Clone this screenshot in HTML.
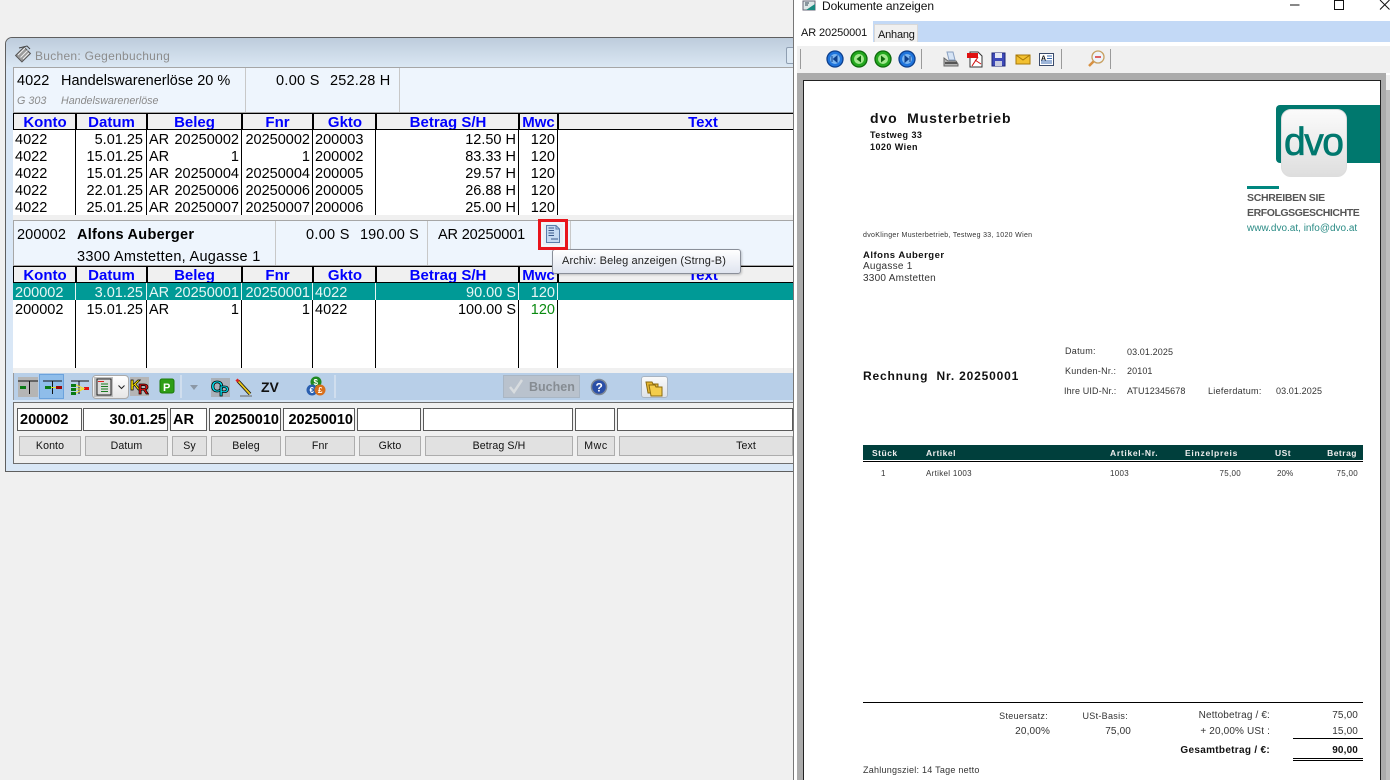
<!DOCTYPE html>
<html><head><meta charset="utf-8"><title>Buchen</title>
<style>
html,body{margin:0;padding:0;width:1390px;height:780px;overflow:hidden;background:#f0f0f0}
body{position:relative;font-family:"Liberation Sans",sans-serif;color:#000}
div,span{position:absolute;box-sizing:border-box;white-space:pre}
.r{left:14px;width:779px;height:17px;line-height:17px;font-size:14.5px;color:#000}
.r span{top:2px;height:15px;overflow:visible}
.c1{left:1px}.c2{left:62px;width:67px;text-align:right}.c3{left:135px}
.c4{left:135px;width:90px;text-align:right}.c5{left:228px;width:68px;text-align:right}
.c6{left:301px}.c7{left:362px;width:140px;text-align:right}.c8{left:505px;width:36px;text-align:right}
.hd{left:13px;width:780px;height:17px;background:#f0f0f0;border-top:1px solid #000;border-bottom:1px solid #000;overflow:hidden}
.hd span{top:1px;height:14px;line-height:15px;font-size:15px;font-weight:bold;color:#00f;text-align:center;overflow:hidden}
.hd span.hs{top:0;height:16px;background:#000;width:2px;border-right:0}
.v{width:1px;background:#000}
.p{background:#eef5fd;border:1px solid #a6a6a6;left:13px;width:800px}
.t{font-size:14.5px;line-height:18px;height:18px}
.in{top:408px;height:23px;background:#fff;border:1px solid #5a5a5a;font-size:14.5px;font-weight:bold;line-height:23px}
.lb{top:436px;height:20px;background:#e1e1e1;border:1px solid #adadad;font-size:10.6px;line-height:18px;text-align:center;color:#111;letter-spacing:.1px}
.d{line-height:14px;height:14px;font-size:9px;color:#333;letter-spacing:.3px}
.n{letter-spacing:.1px}
.s{font-size:10px;letter-spacing:.15px}
.rt{text-align:right}
.b{font-weight:bold;color:#111}
.h{color:#eee;font-weight:bold;font-size:8.5px;letter-spacing:.5px;top:446px}
</style></head><body>

<!-- left window -->
<div style="left:5px;top:37px;width:800px;height:435px;border:1px solid #5f5f5f;border-top-left-radius:7px;background:#d9e7f6"></div>
<div style="left:6px;top:38px;width:787px;height:30px;border-top-left-radius:6px;background:linear-gradient(#bdccdc,#dbe8f4)"></div>
<div style="left:35px;top:48px;height:16px;line-height:16px;font-size:12px;color:#8c8c8c;letter-spacing:.28px">Buchen: Gegenbuchung</div>
<div style="left:786px;top:47px;width:10px;height:17px;border:1px solid #8f9fb2;border-radius:2px;background:#dce8f3"></div>

<!-- panel 1 -->
<div class="p" style="top:67px;height:46px"></div>
<div style="left:245px;top:68px;width:1px;height:44px;background:#c8c8c8"></div>
<div style="left:399px;top:68px;width:1px;height:44px;background:#c8c8c8"></div>
<div class="t" style="left:17px;top:72px">4022</div>
<div class="t" style="left:61px;top:72px">Handelswarenerlöse 20 %</div>
<div class="t" style="left:276px;top:72px;letter-spacing:.3px">0.00 S</div>
<div class="t" style="left:330px;top:72px;letter-spacing:.2px">252.28 H</div>
<div style="left:17px;top:94px;height:14px;line-height:14px;font-size:10.8px;font-style:italic;color:#8a8a8a">G 303</div>
<div style="left:61px;top:94px;height:14px;line-height:14px;font-size:10.7px;font-style:italic;color:#8a8a8a">Handelswarenerlöse</div>

<!-- table 1 -->
<div style="left:13px;top:113px;width:780px;height:103px;background:#fff"></div>
<div style="left:13px;top:215px;width:780px;height:5px;background:#f0f0f0"></div>
<div class="hd" style="top:113px">
<span style="left:2px;width:60px">Konto</span><span style="left:64px;width:69px">Datum</span><span style="left:135px;width:93px">Beleg</span><span style="left:230px;width:69px">Fnr</span><span style="left:301px;width:62px">Gkto</span><span style="left:364px;width:142px">Betrag S/H</span><span style="left:507px;width:37px">Mwc</span><span style="left:546px;width:288px">Text</span>
<span class="hs" style="left:62px"></span><span class="hs" style="left:133px"></span><span class="hs" style="left:228px"></span><span class="hs" style="left:299px"></span><span class="hs" style="left:362px"></span><span class="hs" style="left:505px"></span><span class="hs" style="left:544px"></span>
</div>
<div class="v" style="left:13px;top:113px;height:17px"></div>
<div class="v" style="left:75px;top:130px;height:85px"></div><div class="v" style="left:146px;top:130px;height:85px"></div><div class="v" style="left:241px;top:130px;height:85px"></div><div class="v" style="left:312px;top:130px;height:85px"></div><div class="v" style="left:375px;top:130px;height:85px"></div><div class="v" style="left:518px;top:130px;height:85px"></div><div class="v" style="left:557px;top:130px;height:85px"></div>
<div class="r" style="top:130px"><span class="c1">4022</span><span class="c2">5.01.25</span><span class="c3">AR</span><span class="c4">20250002</span><span class="c5">20250002</span><span class="c6">200003</span><span class="c7">12.50 H</span><span class="c8">120</span></div>
<div class="r" style="top:147px"><span class="c1">4022</span><span class="c2">15.01.25</span><span class="c3">AR</span><span class="c4">1</span><span class="c5">1</span><span class="c6">200002</span><span class="c7">83.33 H</span><span class="c8">120</span></div>
<div class="r" style="top:164px"><span class="c1">4022</span><span class="c2">15.01.25</span><span class="c3">AR</span><span class="c4">20250004</span><span class="c5">20250004</span><span class="c6">200005</span><span class="c7">29.57 H</span><span class="c8">120</span></div>
<div class="r" style="top:181px"><span class="c1">4022</span><span class="c2">22.01.25</span><span class="c3">AR</span><span class="c4">20250006</span><span class="c5">20250006</span><span class="c6">200005</span><span class="c7">26.88 H</span><span class="c8">120</span></div>
<div class="r" style="top:198px"><span class="c1">4022</span><span class="c2">25.01.25</span><span class="c3">AR</span><span class="c4">20250007</span><span class="c5">20250007</span><span class="c6">200006</span><span class="c7">25.00 H</span><span class="c8">120</span></div>

<!-- panel 2 -->
<div class="p" style="top:220px;height:46px"></div>
<div style="left:275px;top:221px;width:1px;height:44px;background:#c8c8c8"></div>
<div style="left:427px;top:221px;width:1px;height:44px;background:#c8c8c8"></div>
<div style="left:570px;top:221px;width:1px;height:28px;background:#c8c8c8"></div>
<div class="t" style="left:17px;top:226px;letter-spacing:.1px">200002</div>
<div class="t" style="left:77px;top:226px;font-weight:bold;letter-spacing:.28px">Alfons Auberger</div>
<div class="t" style="left:77px;top:248px;letter-spacing:.28px">3300 Amstetten, Augasse 1</div>
<div class="t" style="left:306px;top:226px;letter-spacing:.3px">0.00 S</div>
<div class="t" style="left:360px;top:226px;letter-spacing:.1px">190.00 S</div>
<div class="t" style="left:438px;top:226px;letter-spacing:-.15px">AR 20250001</div>

<!-- table 2 -->
<div style="left:13px;top:266px;width:780px;height:102px;background:#fff"></div>
<div style="left:13px;top:368px;width:780px;height:5px;background:#f0f0f0"></div>
<div class="hd" style="top:266px">
<span style="left:2px;width:60px">Konto</span><span style="left:64px;width:69px">Datum</span><span style="left:135px;width:93px">Beleg</span><span style="left:230px;width:69px">Fnr</span><span style="left:301px;width:62px">Gkto</span><span style="left:364px;width:142px">Betrag S/H</span><span style="left:507px;width:37px">Mwc</span><span style="left:546px;width:288px">Text</span>
<span class="hs" style="left:62px"></span><span class="hs" style="left:133px"></span><span class="hs" style="left:228px"></span><span class="hs" style="left:299px"></span><span class="hs" style="left:362px"></span><span class="hs" style="left:505px"></span><span class="hs" style="left:544px"></span>
</div>
<div class="v" style="left:13px;top:266px;height:17px"></div>
<div class="v" style="left:75px;top:300px;height:68px"></div><div class="v" style="left:146px;top:300px;height:68px"></div><div class="v" style="left:241px;top:300px;height:68px"></div><div class="v" style="left:312px;top:300px;height:68px"></div><div class="v" style="left:375px;top:300px;height:68px"></div><div class="v" style="left:518px;top:300px;height:68px"></div><div class="v" style="left:557px;top:300px;height:68px"></div>
<div style="left:13px;top:283px;width:780px;height:17px;background:#009a96"></div>
<div class="v" style="left:75px;top:283px;height:17px;background:#e6f5f4"></div><div class="v" style="left:146px;top:283px;height:17px;background:#e6f5f4"></div><div class="v" style="left:241px;top:283px;height:17px;background:#e6f5f4"></div><div class="v" style="left:312px;top:283px;height:17px;background:#e6f5f4"></div><div class="v" style="left:375px;top:283px;height:17px;background:#e6f5f4"></div><div class="v" style="left:518px;top:283px;height:17px;background:#e6f5f4"></div><div class="v" style="left:557px;top:283px;height:17px;background:#e6f5f4"></div>
<div class="r" style="top:283px;color:#e8f6f5"><span class="c1">200002</span><span class="c2">3.01.25</span><span class="c3">AR</span><span class="c4">20250001</span><span class="c5">20250001</span><span class="c6">4022</span><span class="c7">90.00 S</span><span class="c8">120</span></div>
<div class="r" style="top:300px"><span class="c1">200002</span><span class="c2">15.01.25</span><span class="c3">AR</span><span class="c4">1</span><span class="c5">1</span><span class="c6">4022</span><span class="c7">100.00 S</span><span class="c8" style="color:#0a8a10">120</span></div>

<!-- toolbar -->
<div style="left:13px;top:373px;width:780px;height:27px;background:#b8cfe8;border-left:1px solid #999"></div>
<div style="left:92px;top:375px;width:37px;height:24px;background:linear-gradient(#fff,#e6e6e6);border:1px solid #aaa;border-radius:4px"></div>
<div style="left:261px;top:378px;height:18px;line-height:18px;font-size:14px;font-weight:bold;color:#111">ZV</div>
<div style="left:503px;top:375px;width:77px;height:23px;background:#b9c2cd;border:1px solid #a9b6c4"></div>
<div style="left:529px;top:379px;height:17px;line-height:17px;font-size:12.5px;font-weight:bold;color:#868c92">Buchen</div>
<div style="left:641px;top:376px;width:27px;height:22px;background:linear-gradient(#fafafa,#dfe3e8);border:1px solid #a8b4c2;border-radius:3px"></div>

<!-- input panel -->
<div style="left:13px;top:402px;width:780px;height:62px;background:#f0f0f0;border:1px solid #6e6e6e;border-right:0"></div>
<div class="in" style="left:17px;width:65px;padding-left:2px">200002</div>
<div class="in" style="left:83px;width:85px;text-align:right;padding-right:1px">30.01.25</div>
<div class="in" style="left:170px;width:37px;padding-left:2px">AR</div>
<div class="in" style="left:209px;width:72px;text-align:right;padding-right:1px">20250010</div>
<div class="in" style="left:283px;width:72px;text-align:right;padding-right:1px">20250010</div>
<div class="in" style="left:357px;width:64px"></div>
<div class="in" style="left:423px;width:150px"></div>
<div class="in" style="left:575px;width:40px"></div>
<div class="in" style="left:617px;width:176px"></div>
<div class="lb" style="left:19px;width:62px">Konto</div>
<div class="lb" style="left:85px;width:83px">Datum</div>
<div class="lb" style="left:172px;width:35px">Sy</div>
<div class="lb" style="left:211px;width:70px">Beleg</div>
<div class="lb" style="left:285px;width:70px">Fnr</div>
<div class="lb" style="left:359px;width:62px">Gkto</div>
<div class="lb" style="left:425px;width:148px">Betrag S/H</div>
<div class="lb" style="left:577px;width:38px;letter-spacing:.6px">Mwc</div>
<div class="lb" style="left:619px;width:174px;padding-left:80px">Text</div>

<!-- tooltip -->
<div style="left:552px;top:249px;width:189px;height:25px;background:linear-gradient(#fff,#dfe4ef);border:1px solid #8a8f99;border-radius:3px;box-shadow:1px 1px 2px rgba(0,0,0,.2)"></div>
<div style="left:562px;top:253px;height:16px;line-height:16px;font-size:11px;color:#222;letter-spacing:.12px">Archiv: Beleg anzeigen (Strng-B)</div>

<!-- right window -->
<div style="left:793px;top:0;width:597px;height:780px;background:#fff;border-left:1px solid #777"></div>
<div style="left:822px;top:0;height:13px;line-height:13px;font-size:12px;color:#111;letter-spacing:-.08px">Dokumente anzeigen</div>
<div style="left:794px;top:21px;width:596px;height:21px;background:#c3d9f6"></div>
<div style="left:794px;top:21px;width:79px;height:23px;background:#fff"></div>
<div style="left:801px;top:25px;height:16px;line-height:16px;font-size:11px;color:#111;letter-spacing:-.1px">AR 20250001</div>
<div style="left:874px;top:24px;width:44px;height:18px;background:#f0f0f0;border:1px solid #d8d8d8;border-bottom:0"></div>
<div style="left:878px;top:27px;height:16px;line-height:16px;font-size:11px;color:#111;letter-spacing:-.2px">Anhang</div>
<div style="left:797px;top:46px;width:593px;height:27px;background:#f0f0f0"></div>
<div style="left:797px;top:73px;width:589px;height:707px;background:#ababab"></div>
<div style="left:1386px;top:75px;width:4px;height:705px;background:#bdbdbd"></div>
<div style="left:1386px;top:75px;width:4px;height:15px;background:#f0f0f0"></div>

<!-- paper -->
<div style="left:803px;top:80px;width:578px;height:700px;background:#fff;border:1px solid #222;border-bottom:0"></div>
<div style="left:1276px;top:105px;width:104px;height:58px;background:#00786e;border-radius:4px 0 0 4px"></div>
<div style="left:1281px;top:109px;width:66px;height:68px;background:linear-gradient(#fbfbfb,#dedede);border:1px solid #ddd;border-radius:10px"></div>
<div style="left:1247px;top:186px;width:32px;height:3px;background:#00877f"></div>
<div style="left:1247px;top:191px;height:14px;line-height:14px;font-size:10.5px;font-weight:bold;color:#555;letter-spacing:-.3px">SCHREIBEN SIE</div>
<div style="left:1247px;top:206px;height:14px;line-height:14px;font-size:10.5px;font-weight:bold;color:#555;letter-spacing:-.43px">ERFOLGSGESCHICHTE</div>
<div style="left:1247px;top:222px;height:14px;line-height:14px;font-size:10px;color:#2a8b85;letter-spacing:0">www.dvo.at, info@dvo.at</div>

<div style="left:870px;top:110px;height:16px;line-height:16px;font-size:14px;font-weight:bold;color:#111;letter-spacing:.9px">dvo  Musterbetrieb</div>
<div class="d b" style="left:870px;top:128px;letter-spacing:.45px">Testweg 33</div>
<div class="d b" style="left:870px;top:140px;letter-spacing:.45px">1020 Wien</div>
<div class="d" style="left:863px;top:229px;font-size:7px;letter-spacing:.32px">dvoKlinger Musterbetrieb, Testweg 33, 1020 Wien</div>
<div class="d b" style="left:863px;top:249px;font-size:9.5px;letter-spacing:.5px">Alfons Auberger</div>
<div class="d" style="left:863px;top:260px;font-size:10px;letter-spacing:.25px">Augasse 1</div>
<div class="d" style="left:863px;top:272px;font-size:10px;letter-spacing:.25px">3300 Amstetten</div>
<div class="d" style="left:1065px;top:344px">Datum:</div>
<div class="d n" style="left:1127px;top:345px">03.01.2025</div>
<div class="d" style="left:1065px;top:364px">Kunden-Nr.:</div>
<div class="d n" style="left:1127px;top:364px">20101</div>
<div class="d" style="left:1064px;top:384px;letter-spacing:.15px">Ihre UID-Nr.:</div>
<div class="d n" style="left:1127px;top:384px">ATU12345678</div>
<div class="d" style="left:1208px;top:384px">Lieferdatum:</div>
<div class="d n" style="left:1276px;top:384px">03.01.2025</div>
<div style="left:863px;top:368px;height:16px;line-height:16px;font-size:12px;font-weight:bold;color:#111;letter-spacing:.82px">Rechnung  Nr. 20250001</div>

<div style="left:863px;top:445px;width:500px;height:15px;background:#003f3c"></div>
<div style="left:863px;top:461px;width:500px;height:1px;background:#000"></div>
<div class="d h" style="left:872px">Stück</div>
<div class="d h" style="left:926px">Artikel</div>
<div class="d h" style="left:1110px;letter-spacing:.7px">Artikel-Nr.</div>
<div class="d h" style="left:1185px;letter-spacing:.75px">Einzelpreis</div>
<div class="d h" style="left:1275px">USt</div>
<div class="d rt h" style="right:33px">Betrag</div>
<div class="d" style="left:881px;top:467px;font-size:8px">1</div>
<div class="d" style="left:926px;top:467px;font-size:8px">Artikel 1003</div>
<div class="d" style="left:1110px;top:467px;font-size:8px">1003</div>
<div class="d rt" style="right:149px;top:467px;font-size:8px">75,00</div>
<div class="d" style="left:1277px;top:467px;font-size:8px;letter-spacing:.1px">20%</div>
<div class="d rt" style="right:32px;top:467px;font-size:8px">75,00</div>

<div style="left:863px;top:702px;width:500px;height:1px;background:#000"></div>
<div class="d rt" style="right:342px;top:709px">Steuersatz:</div>
<div class="d rt" style="right:262px;top:709px">USt-Basis:</div>
<div class="d rt s" style="right:120px;top:709px">Nettobetrag / €:</div>
<div class="d rt s" style="right:32px;top:709px">75,00</div>
<div class="d rt s" style="right:340px;top:725px">20,00%</div>
<div class="d rt s" style="right:259px;top:725px">75,00</div>
<div class="d rt s" style="right:120px;top:725px">+ 20,00% USt :</div>
<div class="d rt s" style="right:32px;top:725px">15,00</div>
<div style="left:1293px;top:738px;width:70px;height:1px;background:#000"></div>
<div class="d rt b s" style="right:120px;top:744px;letter-spacing:.3px">Gesamtbetrag / €:</div>
<div class="d rt b s" style="right:32px;top:744px">90,00</div>
<div style="left:1293px;top:758px;width:70px;height:3px;border-top:1px solid #000;border-bottom:1px solid #000"></div>
<div class="d" style="left:863px;top:763px;font-size:9px;letter-spacing:.25px">Zahlungsziel: 14 Tage netto</div>

<!-- icons overlay -->
<svg width="1390" height="780" viewBox="0 0 1390 780" style="position:absolute;left:0;top:0" fill="none">
<text x="1284" y="155" font-family="Liberation Sans" font-size="39" fill="#00786e" stroke="#00786e" stroke-width=".7" letter-spacing="-1.500">dvo</text>
<!-- title icon -->
<g transform="translate(15,46)"><rect x="2" y="4" width="12" height="9" transform="rotate(-45 8 8.5)" fill="#9a9a9a" stroke="#555"/><path d="M3 9L10 2M5.500 11.500L12.500 4.500M8 13L14 7" stroke="#eee"/><path d="M4 2L12 0L15 3" stroke="#444"/></g>
<!-- red box & doc icon -->
<rect x="539.500" y="220.500" width="27" height="28" fill="#dfe8f3" stroke="#e8141c" stroke-width="3"/>
<rect x="542" y="223" width="22" height="23" fill="#e9eef5" stroke="#fff"/>
<path d="M546.500 225.500H556L559.500 229V242.500H546.500Z" fill="#c6daf2" stroke="#5a7cab"/>
<path d="M548.500 228H554M548.500 230.500H554M548.500 233H554M548.500 235.500H554M551 239H558" stroke="#3c5a8a"/><path d="M556 226V229H559" stroke="#5a7cab"/>
<!-- toolbar -->
<rect x="18" y="377" width="20" height="20" fill="#b5b5b5"/>
<path d="M18 381H38M29.500 381V394" stroke="#111"/><rect x="20" y="386" width="6" height="3" fill="#0a7a14"/>
<rect x="39.500" y="374.500" width="24" height="24" fill="#8fbdea" stroke="#6ba2dc"/>
<path d="M43 381H62M52.500 381V394" stroke="#111"/><rect x="45" y="386" width="6" height="3" fill="#0a7a14"/><rect x="56" y="386" width="6" height="3" fill="#9a0a0a"/><path d="M51 387.500H56" stroke="#dd2"/>
<path d="M71 381H89M79 381V394" stroke="#111"/><rect x="71" y="384" width="5" height="3" fill="#0a7a14"/><rect x="71" y="388" width="5" height="3" fill="#0a7a14"/><rect x="71" y="392" width="5" height="3" fill="#0a7a14"/><rect x="84" y="387" width="5" height="3" fill="#e01010"/><path d="M76 385L84 388.500L76 393M76 389H84" stroke="#f2e020"/>
<rect x="94" y="377" width="19" height="20" fill="#bfbfbf"/><rect x="97" y="379" width="14" height="16" fill="#ddd" stroke="#222"/><path d="M98 381.500H104" stroke="#d22"/><path d="M101 384H108M101 386.500H108M101 389H108M101 391.500H108" stroke="#1a7a20"/>
<path d="M118.500 385.500L121.500 388.500L124.500 385.500" stroke="#222"/>
<rect x="130" y="377" width="19" height="19" fill="#b5b5b5"/>
<text x="130" y="390" font-family="Liberation Sans" font-weight="bold" font-size="15" fill="#ffe600" stroke="#000" stroke-width=".7">K</text><text x="138" y="394" font-family="Liberation Sans" font-weight="bold" font-size="15" fill="#e01010" stroke="#000" stroke-width=".7">R</text>
<rect x="160" y="379" width="14" height="14" rx="2" fill="#2f9e16" stroke="#1d7a0c"/><text x="163" y="391" font-family="Liberation Sans" font-weight="bold" font-size="11" fill="#fff">P</text>
<path d="M181 375V398" stroke="#e8eef5" stroke-width="1"/>
<path d="M190 385H198L194 390Z" fill="#8c98a6"/>
<rect x="211" y="378" width="19" height="19" fill="#a9b0b8"/>
<text x="211" y="392" font-family="Liberation Sans" font-weight="bold" font-size="16" fill="#00e0f0" stroke="#000" stroke-width=".8">O</text><text x="219" y="396" font-family="Liberation Sans" font-weight="bold" font-size="15" fill="#00e0f0" stroke="#000" stroke-width=".8">P</text>
<path d="M238 381L250 394" stroke="#111" stroke-width="3.400"/><path d="M238.500 381.500L250 394" stroke="#e8c820" stroke-width="1.800"/><path d="M236.500 379.500L238.500 381.500" stroke="#d22" stroke-width="3"/><path d="M240 396H252" stroke="#666"/>
<circle cx="316" cy="382" r="5.500" fill="#1f8a20"/><circle cx="312" cy="390" r="5.500" fill="#2a5fb0"/><circle cx="320" cy="390" r="5.500" fill="#d8701c"/>
<text x="313.500" y="385" font-family="Liberation Sans" font-weight="bold" font-size="8" fill="#fff">$</text><text x="309.500" y="393" font-family="Liberation Sans" font-weight="bold" font-size="8" fill="#fff">€</text><text x="318" y="393" font-family="Liberation Sans" font-weight="bold" font-size="8" fill="#fff">£</text>
<path d="M335 375V398" stroke="#e8eef5"/>
<path d="M510 387L514 392L522 380" stroke="#d8dcdf" stroke-width="2.500"/>
<circle cx="599" cy="387" r="7.500" fill="#2a4fa8" stroke="#7d8794" stroke-width="1.500"/><text x="595.500" y="391.500" font-family="Liberation Sans" font-weight="bold" font-size="12" fill="#fff">?</text>
<path d="M646 382H652L653 384H658V393H648Z" fill="#e6b730" stroke="#8a6a10"/><path d="M649 385H655L656 387H662V396H651Z" fill="#f4cd4c" stroke="#8a6a10"/>
<!-- window controls -->
<path d="M1290 5H1299.500" stroke="#111"/><rect x="1334.500" y="0.500" width="9" height="9" stroke="#111"/><path d="M1380 0L1389.500 9.500M1389.500 0L1380 9.500" stroke="#111"/>
<rect x="803" y="1" width="12" height="9" fill="#dfe8e8" stroke="#667"/><path d="M805 3H809M805 5H808" stroke="#345"/><path d="M806 10L815 4V10Z" fill="#1a8a80"/>
<!-- doc toolbar -->
<path d="M800.500 49V69M921.500 49V69M1061.500 49V69M1110.500 49V69" stroke="#9a9a9a"/>
<circle cx="835" cy="59" r="8" fill="#1f74dc" stroke="#0d3f8c" stroke-width="1.300"/><circle cx="835" cy="59" r="5" fill="#7cb6f0"/><path d="M837 56L833.500 59L837 62ZM832 56V62" fill="#0d3f8c" stroke="#0d3f8c"/>
<circle cx="859" cy="59" r="8" fill="#24a81f" stroke="#0d6a0c" stroke-width="1.300"/><circle cx="859" cy="59" r="5" fill="#a4e890"/><path d="M861 55.500L856.500 59L861 62.500Z" fill="#0d6a0c"/>
<circle cx="883" cy="59" r="8" fill="#24a81f" stroke="#0d6a0c" stroke-width="1.300"/><circle cx="883" cy="59" r="5" fill="#a4e890"/><path d="M881 55.500L885.500 59L881 62.500Z" fill="#0d6a0c"/>
<circle cx="907" cy="59" r="8" fill="#1f74dc" stroke="#0d3f8c" stroke-width="1.300"/><circle cx="907" cy="59" r="5" fill="#7cb6f0"/><path d="M905 56L908.500 59L905 62ZM910 56V62" fill="#0d3f8c" stroke="#0d3f8c"/>
<path d="M944 58L948 61H956L958 64V66H944Z" fill="#b4b4b4" stroke="#666"/><path d="M947 52H953L955 60H949Z" fill="#d6e4f5" stroke="#8aa0c0"/><rect x="945" y="62" width="12" height="2" fill="#555"/>
<path d="M970 52H978L982 56V67H970Z" fill="#fff" stroke="#333"/><rect x="967" y="53" width="11" height="5" fill="#e01010"/><path d="M972 66C975 61 977 59 978 57M975 60L981 64" stroke="#d01010"/>
<path d="M992 53H1005V66H992Z" fill="#3d49b8" stroke="#1e2678"/><rect x="995" y="53" width="7" height="5" fill="#e6e8f5"/><rect x="995" y="61" width="7" height="5" fill="#c9cce0"/>
<rect x="1016" y="55" width="14" height="9" fill="#f2c030" stroke="#a87808"/><path d="M1016 55L1023 60L1030 55" stroke="#a87808"/>
<rect x="1039.500" y="53.500" width="14" height="12" fill="#fff" stroke="#3a4a6a"/><path d="M1047 56H1052M1047 58.500H1052M1041 61H1052M1041 63H1052" stroke="#3a6ab0"/><text x="1041" y="60.500" font-family="Liberation Sans" font-weight="bold" font-size="7" fill="#111">A</text>
<path d="M1089 66L1094 61" stroke="#d89040" stroke-width="2.500"/><circle cx="1098" cy="57" r="6" fill="#eef4fa" stroke="#c8a060" stroke-width="1.300"/><path d="M1095 57H1101" stroke="#d83030" stroke-width="1.500"/>
</svg>
</body></html>
